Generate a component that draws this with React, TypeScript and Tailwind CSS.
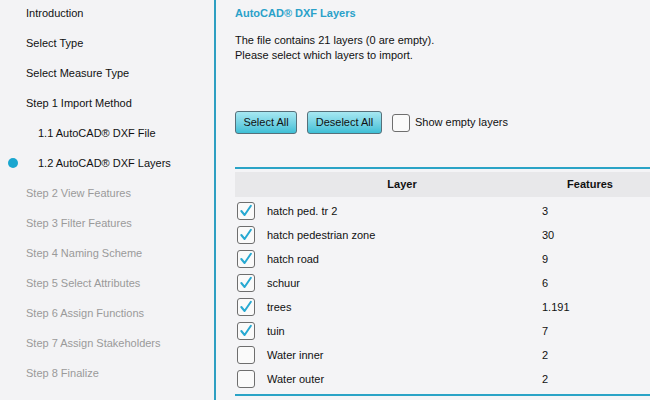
import React from "react";

const steps: { label: string; sub?: boolean; active?: boolean; disabled?: boolean }[] = [
  { label: "Introduction" },
  { label: "Select Type" },
  { label: "Select Measure Type" },
  { label: "Step 1 Import Method" },
  { label: "1.1 AutoCAD® DXF File", sub: true },
  { label: "1.2 AutoCAD® DXF Layers", sub: true, active: true },
  { label: "Step 2 View Features", disabled: true },
  { label: "Step 3 Filter Features", disabled: true },
  { label: "Step 4 Naming Scheme", disabled: true },
  { label: "Step 5 Select Attributes", disabled: true },
  { label: "Step 6 Assign Functions", disabled: true },
  { label: "Step 7 Assign Stakeholders", disabled: true },
  { label: "Step 8 Finalize", disabled: true },
];

const layers = [
  { name: "hatch ped. tr 2", n: "3", on: true },
  { name: "hatch pedestrian zone", n: "30", on: true },
  { name: "hatch road", n: "9", on: true },
  { name: "schuur", n: "6", on: true },
  { name: "trees", n: "1.191", on: true },
  { name: "tuin", n: "7", on: true },
  { name: "Water inner", n: "2", on: false },
  { name: "Water outer", n: "2", on: false },
];

function Box({ checked }: { checked: boolean }) {
  return (
    <div className="w-[18px] h-[18px] rounded-[3px] border border-[#6e6e6e] bg-[#fafafa] flex items-center justify-center">
      {checked && (
        <svg width="14" height="14" viewBox="0 0 14 14">
          <path d="M2.3 7 L5.6 11 L11.9 1.8" fill="none" stroke="#27a9d2" strokeWidth="2" strokeLinecap="round" strokeLinejoin="round" />
        </svg>
      )}
    </div>
  );
}

export default function App() {
  return (
    <div
      className="w-[650px] h-[400px] overflow-hidden flex bg-[#f4f4f6] text-[11px] text-[#111]"
      style={{ fontFamily: '"Liberation Sans", Arial, sans-serif' }}
    >
      <div className="w-[216px] shrink-0 border-r-2 border-[#2d9fc2] bg-[#f3f3f5]">
        {steps.map((s) => (
          <div key={s.label} className="h-[30px] flex items-start pt-[7px] leading-[13px]">
            {s.active ? (
              <div className="flex items-center pl-[8px] gap-[20px]">
                <div className="w-[10px] h-[10px] rounded-full bg-[#1aa6cf] mt-[-2px]" />
                <span>{s.label}</span>
              </div>
            ) : (
              <span className={(s.sub ? "pl-[38px] " : "pl-[26px] ") + (s.disabled ? "text-[#9a9a9a]" : "")}>{s.label}</span>
            )}
          </div>
        ))}
      </div>
      <div className="flex-1 pl-[19px] pt-[7px] leading-[13px]">
        <div className="font-bold text-[#2aa1c9]">AutoCAD® DXF Layers</div>
        <div className="mt-[13px] leading-[15px]">
          <div>The file contains 21 layers (0 are empty).</div>
          <div>Please select which layers to import.</div>
        </div>
        <div className="mt-[48px] flex items-center h-[23px]">
          <button className="h-[23px] w-[62px] rounded-[3px] border border-[#56707a] bg-gradient-to-b from-[#a6e8f2] to-[#3cbfd6] text-[11px] text-[#111] leading-none">
            Select All
          </button>
          <button className="ml-[10px] h-[23px] w-[75px] rounded-[3px] border border-[#56707a] bg-gradient-to-b from-[#a6e8f2] to-[#3cbfd6] text-[11px] text-[#111] leading-none">
            Deselect All
          </button>
          <div className="ml-[10px]">
            <Box checked={false} />
          </div>
          <span className="ml-[5px]">Show empty layers</span>
        </div>
        <div className="mt-[33px] border-t-2 border-[#2aa3c6] pt-[3px]">
          <div className="grid grid-cols-[32px_270px_106px_1fr] h-[25px] bg-[#e8e8ea] items-center font-bold">
            <div />
            <div className="text-center">Layer</div>
            <div className="text-center">Features</div>
            <div />
          </div>
          <div className="pt-[2px] pb-[3px] border-b-2 border-[#2aa3c6]">
            {layers.map((l) => (
              <div key={l.name} className="grid grid-cols-[32px_270px_106px_1fr] h-[24px] items-center">
                <div className="pl-[2px]">
                  <Box checked={l.on} />
                </div>
                <div>{l.name}</div>
                <div className="pl-[5px]">{l.n}</div>
                <div />
              </div>
            ))}
          </div>
        </div>
      </div>
    </div>
  );
}
